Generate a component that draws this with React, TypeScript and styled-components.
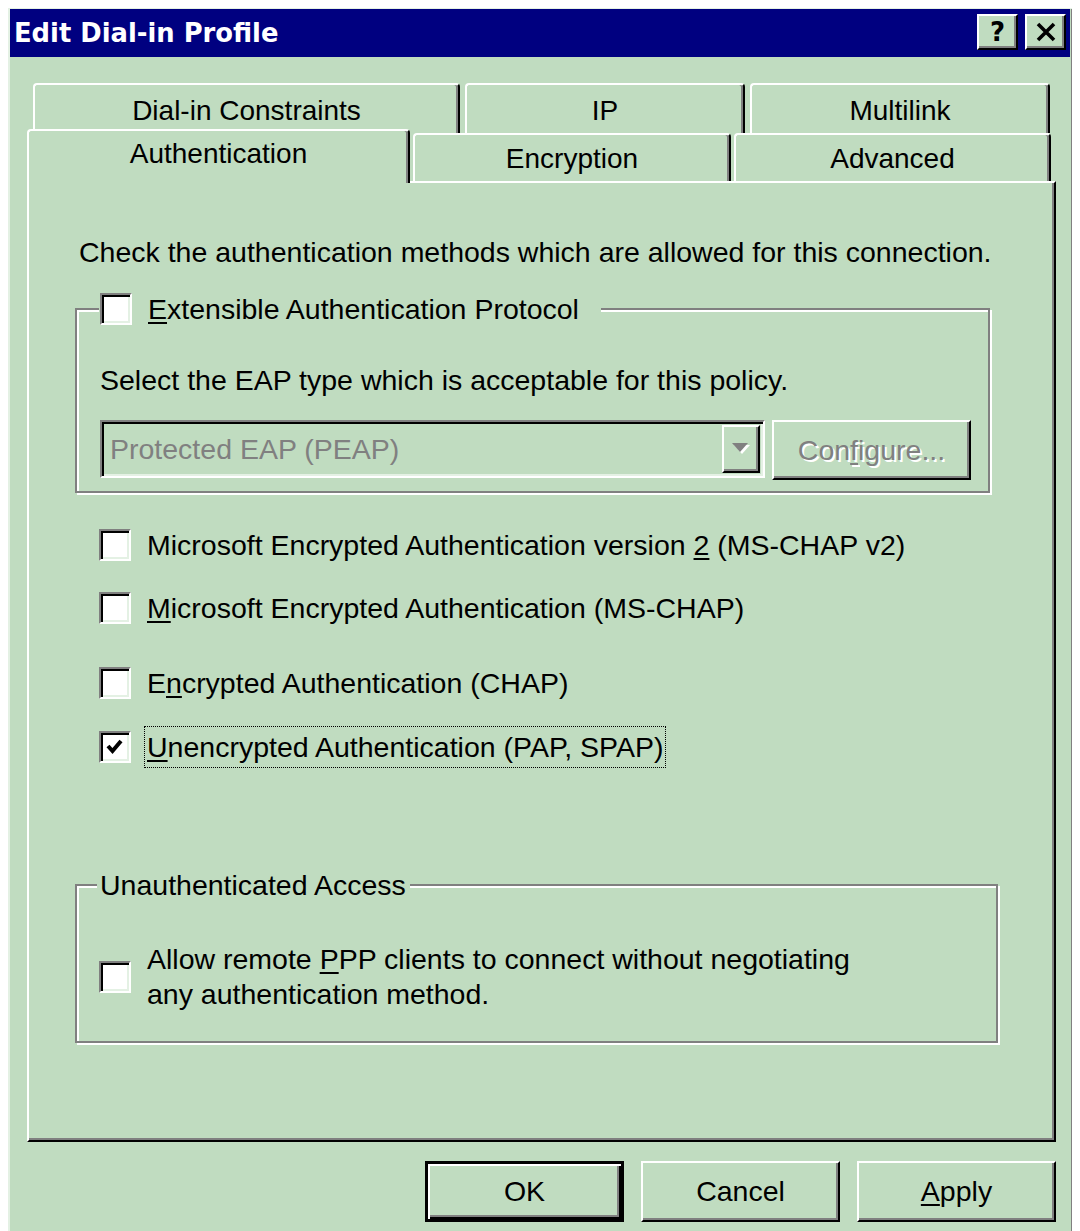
import styled, { createGlobalStyle, css } from 'styled-components'

const FACE = '#c0dcc0'
const LIGHT = '#e4f1e4'
const SHADOW = '#808080'
const DARK = '#000000'
const UI_FONT = '"Liberation Sans", Arial, Helvetica, sans-serif'

type TabItem = { label: string; width: number; selected?: boolean }

const backTabs: TabItem[] = [
  { label: 'Dial-in Constraints', width: 427 },
  { label: 'IP', width: 280 },
  { label: 'Multilink', width: 300 }
]

const frontTabs: TabItem[] = [
  { label: 'Authentication', width: 383, selected: true },
  { label: 'Encryption', width: 318 },
  { label: 'Advanced', width: 317 }
]

type Method = {
  before: string
  hotkey: string
  after: string
  gap: number
  checked?: boolean
  focused?: boolean
}

const methods: Method[] = [
  {
    before: 'Microsoft Encrypted Authentication version ',
    hotkey: '2',
    after: ' (MS-CHAP v2)',
    gap: 32
  },
  {
    before: '',
    hotkey: 'M',
    after: 'icrosoft Encrypted Authentication (MS-CHAP)',
    gap: 23
  },
  { before: 'E', hotkey: 'n', after: 'crypted Authentication (CHAP)', gap: 35 },
  {
    before: '',
    hotkey: 'U',
    after: 'nencrypted Authentication (PAP, SPAP)',
    gap: 23,
    checked: true,
    focused: true
  }
]

export default function App() {
  return (
    <>
      <GlobalStyle />
      <Window>
        <TitleBar>
          <Title>Edit Dial-in Profile</Title>
          <CaptionButtons>
            <CaptionButton>?</CaptionButton>
            <CaptionButton>
              <svg width="22" height="20" viewBox="0 0 22 20">
                <path
                  d="M3 2 L19 18 M19 2 L3 18"
                  stroke="#000"
                  strokeWidth="3.6"
                  fill="none"
                />
              </svg>
            </CaptionButton>
          </CaptionButtons>
        </TitleBar>

        <Body>
          <TabStrip>
            <TabRow $back>
              {backTabs.map((t) => (
                <Tab key={t.label} $width={t.width} $row="back">
                  {t.label}
                </Tab>
              ))}
            </TabRow>
            <TabRow>
              {frontTabs.map((t) => (
                <Tab
                  key={t.label}
                  $width={t.width}
                  $row={t.selected ? 'selected' : 'front'}
                >
                  {t.label}
                </Tab>
              ))}
            </TabRow>
          </TabStrip>

          <Panel>
            <Intro>
              Check the authentication methods which are allowed for this
              connection.
            </Intro>

            <GroupBox $width={915} $top={39} $padLeft={23} $padBottom={11}>
              <Legend $withBox>
                <CheckBox />
                <span>
                  <Hotkey>E</Hotkey>xtensible Authentication Protocol
                </span>
              </Legend>
              <GroupText>
                Select the EAP type which is acceptable for this policy.
              </GroupText>
              <ComboRow>
                <Combo>
                  <ComboValue>Protected EAP (PEAP)</ComboValue>
                  <DropButton>
                    <svg width="22" height="14" viewBox="0 0 22 14">
                      <polygon points="4,3 20,3 12,12" fill="#fff" />
                      <polygon points="2,1 18,1 10,10" fill={SHADOW} />
                    </svg>
                  </DropButton>
                </Combo>
                <PushButton $width={199} $height={60} $disabled>
                  Con<Hotkey>f</Hotkey>igure...
                </PushButton>
              </ComboRow>
            </GroupBox>

            {methods.map((m) => (
              <CheckRow key={m.after} $top={m.gap} $indent={24}>
                <CheckBox checked={m.checked} />
                {m.focused ? (
                  <FocusLabel>
                    {m.before}
                    <Hotkey>{m.hotkey}</Hotkey>
                    {m.after}
                  </FocusLabel>
                ) : (
                  <span>
                    {m.before}
                    <Hotkey>{m.hotkey}</Hotkey>
                    {m.after}
                  </span>
                )}
              </CheckRow>
            ))}

            <GroupBox $width={923} $top={116} $padLeft={22} $padBottom={29}>
              <Legend>Unauthenticated Access</Legend>
              <CheckRow $top={40} $indent={0}>
                <CheckBox />
                <TwoLines>
                  Allow remote <Hotkey>P</Hotkey>PP clients to connect without
                  negotiating
                  <br />
                  any authentication method.
                </TwoLines>
              </CheckRow>
            </GroupBox>
          </Panel>

          <ButtonBar>
            <PushButton $width={199} $height={61} $default>
              OK
            </PushButton>
            <PushButton $width={199} $height={61}>
              Cancel
            </PushButton>
            <PushButton $width={199} $height={61}>
              <Hotkey>A</Hotkey>pply
            </PushButton>
          </ButtonBar>
        </Body>
      </Window>
    </>
  )
}

function CheckBox({ checked }: { checked?: boolean }) {
  return (
    <Box>
      {checked && (
        <svg width="20" height="18" viewBox="0 0 20 18">
          <polyline
            points="3,8 7.5,13 16,3"
            stroke="#000"
            strokeWidth="4"
            fill="none"
          />
        </svg>
      )}
    </Box>
  )
}

const GlobalStyle = createGlobalStyle`
  html, body {
    overflow: hidden;
    background: #ffffff;
  }
  body {
    margin: 8px;
    font-family: ${UI_FONT};
    font-size: 28.5px;
    color: #000;
  }
  * {
    box-sizing: border-box;
  }
`

const raised = css`
  border: 2px solid;
  border-color: #fff ${DARK} ${DARK} #fff;
  box-shadow: inset -2px -2px 0 ${SHADOW};
`

const sunken = css`
  border: 2px solid;
  border-color: ${SHADOW} #fff #fff ${SHADOW};
  box-shadow: inset 2px 2px 0 ${DARK}, inset -2px -2px 0 ${LIGHT};
`

const Window = styled.div`
  width: 1068px;
  height: 1240px;
  background: ${FACE};
  border-style: solid;
  border-width: 1px 3px 0 2px;
  border-color: ${LIGHT} ${DARK} ${DARK} ${LIGHT};
  box-shadow: inset -2px 0 0 ${SHADOW};
  padding-right: 3px;
`

const TitleBar = styled.div`
  height: 48px;
  background: #000080;
  display: flex;
  align-items: center;
  justify-content: space-between;
  padding: 0 4px 0 4px;
`

const Title = styled.div`
  font-family: 'DejaVu Sans', Verdana, sans-serif;
  font-weight: bold;
  font-size: 25.8px;
  color: #fff;
`

const CaptionButtons = styled.div`
  display: flex;
  gap: 7px;
  align-self: flex-start;
  margin-top: 5px;
`

const CaptionButton = styled.div`
  width: 41px;
  height: 36px;
  background: ${FACE};
  ${raised};
  display: flex;
  align-items: center;
  justify-content: center;
  font-family: 'DejaVu Sans', Verdana, sans-serif;
  font-weight: bold;
  font-size: 26px;
  line-height: 1;
`

const Body = styled.div`
  padding: 26px 14px 0 17px;
`

const TabStrip = styled.div`
  display: flex;
  flex-direction: column;
`

const TabRow = styled.div<{ $back?: boolean }>`
  display: flex;
  align-items: flex-end;
  height: ${(p) => (p.$back ? 50 : 48)}px;
  gap: ${(p) => (p.$back ? 5 : 3)}px;
  padding-left: ${(p) => (p.$back ? 6 : 0)}px;
`

const Tab = styled.div<{ $width: number; $row: 'back' | 'front' | 'selected' }>`
  width: ${(p) => p.$width}px;
  height: ${(p) => (p.$row === 'selected' ? 54 : p.$row === 'back' ? 50 : 48)}px;
  margin-bottom: ${(p) => (p.$row === 'selected' ? -2 : 0)}px;
  position: ${(p) => (p.$row === 'selected' ? 'relative' : 'static')};
  z-index: ${(p) => (p.$row === 'selected' ? 2 : 0)};
  background: ${FACE};
  border-top: 2px solid #fff;
  border-left: 2px solid #fff;
  border-right: 2px solid ${DARK};
  border-radius: 4px 4px 0 0;
  box-shadow: inset -2px 0 0 ${SHADOW};
  display: flex;
  align-items: center;
  justify-content: center;
  padding-top: ${(p) => (p.$row === 'back' ? 4 : p.$row === 'front' ? 2 : 0)}px;
  padding-bottom: ${(p) => (p.$row === 'selected' ? 6 : 0)}px;
  font-size: 28px;
  line-height: 34px;
`

const Panel = styled.div`
  height: 961px;
  border: 2px solid;
  border-color: #fff ${DARK} ${DARK} #fff;
  box-shadow: inset -2px -2px 0 ${SHADOW};
  padding-left: 46px;
  display: flex;
  flex-direction: column;
  align-items: flex-start;
`

const Intro = styled.div`
  margin: 52px 0 0 4px;
  line-height: 34px;
`

const GroupBox = styled.div<{
  $width: number
  $top: number
  $padLeft: number
  $padBottom: number
}>`
  width: ${(p) => p.$width}px;
  margin-top: ${(p) => p.$top}px;
  padding: 0 0 ${(p) => p.$padBottom}px ${(p) => p.$padLeft}px;
  border: 2px solid ${SHADOW};
  box-shadow: 2px 2px 0 #fff, inset 2px 2px 0 #fff;
  display: flex;
  flex-direction: column;
  align-items: flex-start;
`

const Legend = styled.div<{ $withBox?: boolean }>`
  display: flex;
  align-items: center;
  gap: 16px;
  height: 34px;
  line-height: 34px;
  margin-top: -18px;
  margin-left: ${(p) => (p.$withBox ? -1 : -2)}px;
  padding: ${(p) => (p.$withBox ? '0 22px 0 1px' : '0 4px 0 3px')};
  background: ${FACE};
`

const GroupText = styled.div`
  margin-top: 37px;
  line-height: 34px;
`

const ComboRow = styled.div`
  display: flex;
  align-items: flex-start;
  gap: 7px;
  margin-top: 23px;
`

const Combo = styled.div`
  width: 665px;
  height: 58px;
  ${sunken};
  display: flex;
  align-items: center;
  padding: 0 3px 0 8px;
`

const ComboValue = styled.span`
  color: ${SHADOW};
  flex: 1;
`

const DropButton = styled.div`
  width: 38px;
  height: 48px;
  background: ${FACE};
  ${raised};
  display: flex;
  align-items: center;
  justify-content: center;
`

const PushButton = styled.div<{
  $width: number
  $height: number
  $default?: boolean
  $disabled?: boolean
}>`
  width: ${(p) => p.$width}px;
  height: ${(p) => p.$height}px;
  background: ${FACE};
  display: flex;
  align-items: center;
  justify-content: center;
  ${(p) =>
    p.$default
      ? css`
          border: 3px solid ${DARK};
          box-shadow: inset 2px 2px 0 #fff, inset -2px -2px 0 ${DARK},
            inset -4px -4px 0 ${SHADOW};
        `
      : raised};
  ${(p) =>
    p.$disabled &&
    css`
      color: ${SHADOW};
      text-shadow: 2px 2px 0 #fff;
    `}
`

const Hotkey = styled.u`
  text-decoration-thickness: 2px;
  text-underline-offset: 3px;
`

const CheckRow = styled.div<{ $top: number; $indent: number }>`
  display: flex;
  align-items: center;
  gap: 16px;
  min-height: 40px;
  margin-top: ${(p) => p.$top}px;
  margin-left: ${(p) => p.$indent}px;
  line-height: 34px;
`

const Box = styled.span`
  flex: none;
  width: 32px;
  height: 32px;
  background: #fff;
  ${sunken};
  display: flex;
  align-items: center;
  justify-content: center;
`

const FocusLabel = styled.span`
  border: 1px dotted ${DARK};
  padding: 3px 2px;
  margin-left: -3px;
`

const TwoLines = styled.span`
  line-height: 35px;
`

const ButtonBar = styled.div`
  display: flex;
  justify-content: flex-end;
  gap: 17px;
  margin-top: 19px;
`
